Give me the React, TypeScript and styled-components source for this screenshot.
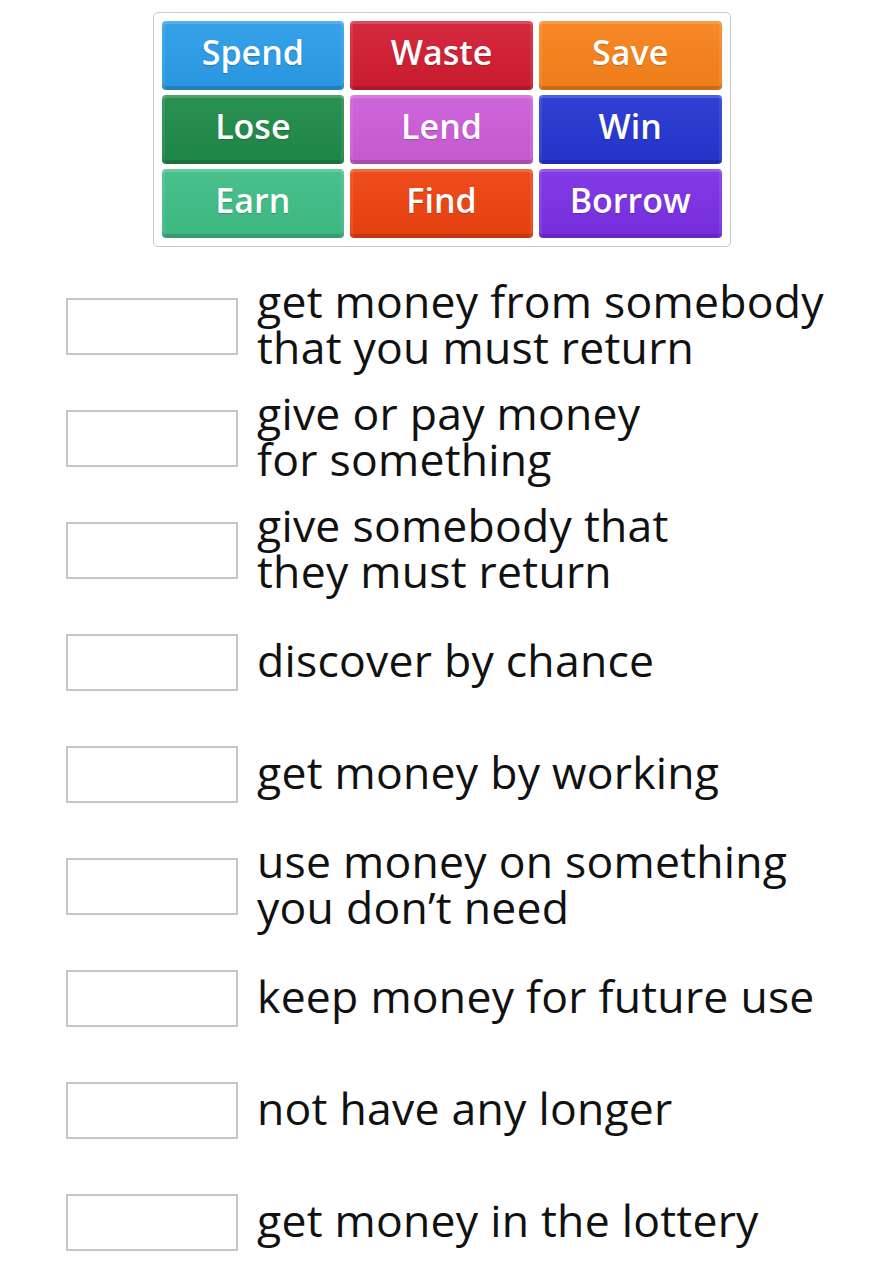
import styled, { createGlobalStyle } from 'styled-components'

const GlobalStyle = createGlobalStyle`
  html, body {
    margin: 0;
    padding: 0;
    background: #ffffff;
    font-family: "Open Sans", "Liberation Sans", sans-serif;
  }
`

const words = [
  { label: 'Spend', color: '#2a9ce8' },
  { label: 'Waste', color: '#d21c31' },
  { label: 'Save', color: '#f7811a' },
  { label: 'Lose', color: '#1e8a48' },
  { label: 'Lend', color: '#cc5cd8' },
  { label: 'Win', color: '#2535d0' },
  { label: 'Earn', color: '#3fbd85' },
  { label: 'Find', color: '#ee420f' },
  { label: 'Borrow', color: '#7a2fe4' },
]

const definitions = [
  ['get money from somebody', 'that you must return'],
  ['give or pay money', 'for something'],
  ['give somebody that', 'they must return'],
  ['discover by chance'],
  ['get money by working'],
  ['use money on something', 'you don\u2019t need'],
  ['keep money for future use'],
  ['not have any longer'],
  ['get money in the lottery'],
]

const Page = styled.div`
  display: flex;
  flex-direction: column;
  padding-top: 12px;
`

const Bank = styled.div`
  align-self: center;
  width: 560px;
  padding: 8px;
  border: 1px solid #c9c9c9;
  border-radius: 5px;
  display: grid;
  grid-template-columns: repeat(3, 1fr);
  grid-auto-rows: 69px;
  gap: 5px 6px;
`

const Tile = styled.div<{ $color: string }>`
  display: flex;
  align-items: center;
  justify-content: center;
  border-radius: 4px;
  background: ${p => p.$color};
  background-image: linear-gradient(rgba(255, 255, 255, 0.06), rgba(0, 0, 0, 0.04));
  box-shadow:
    inset 0 3px 0 rgba(255, 255, 255, 0.16),
    inset 3px 0 0 rgba(255, 255, 255, 0.08),
    inset -3px 0 0 rgba(255, 255, 255, 0.08),
    inset 0 -4px 0 rgba(0, 0, 0, 0.14);
  color: #ffffff;
  font-size: 34px;
  font-weight: 600;
  padding-bottom: 7px;
  box-sizing: border-box;
  text-shadow: 0 1px 1px rgba(0, 0, 0, 0.2);
`

const List = styled.div`
  display: flex;
  flex-direction: column;
  padding: 23px 0 0 66px;
`

const Row = styled.div`
  display: flex;
  align-items: center;
  height: 112px;
  gap: 19px;
`

const Slot = styled.div`
  flex: none;
  width: 168px;
  height: 53px;
  border: 2px solid #c6c6c6;
  background: #ffffff;
`

const Definition = styled.div`
  font-size: 44.5px;
  line-height: 46px;
  color: #111111;
  letter-spacing: 0.25px;
  padding-bottom: 5px;
`

export default function App() {
  return (
    <>
      <GlobalStyle />
      <Page>
        <Bank>
          {words.map(w => (
            <Tile key={w.label} $color={w.color}>{w.label}</Tile>
          ))}
        </Bank>
        <List>
          {definitions.map((lines, i) => (
            <Row key={i}>
              <Slot />
              <Definition>
                {lines.map((line, j) => (
                  <div key={j}>{line}</div>
                ))}
              </Definition>
            </Row>
          ))}
        </List>
      </Page>
    </>
  )
}
